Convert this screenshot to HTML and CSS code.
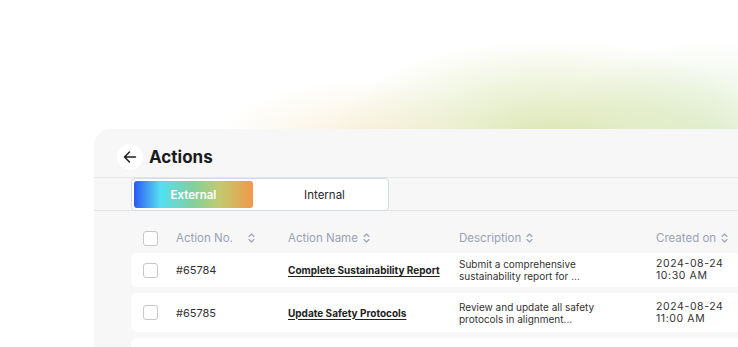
FILE: index.html
```html
<!DOCTYPE html>
<html lang="en">
<head>
  <meta charset="UTF-8">
  <title>Actions</title>
  <link rel="stylesheet" href="styles.css">
</head>
<body>

<div class="stage">
  <section class="card">

    <header class="card-head">
      <button class="back" aria-label="Back">
        <svg width="14" height="14" viewBox="0 0 14 14" fill="none" stroke="#1d1d1f" stroke-width="1.5" stroke-linecap="round" stroke-linejoin="round">
          <path d="M12.5 7H1.5M6.5 2L1.5 7l5 5"/>
        </svg>
      </button>
      <h1>Actions</h1>
    </header>

    <div class="tab-row">
      <div class="tabs">
        <span class="tab active">External</span>
        <span class="tab">Internal</span>
      </div>
    </div>

    <div class="table">
      <div class="row head">
        <span class="check"></span>
        <span class="th th-wide">Action No. <i class="sort"></i></span>
        <span class="th">Action Name <i class="sort"></i></span>
        <span class="th">Description <i class="sort"></i></span>
        <span class="th">Created on <i class="sort"></i></span>
      </div>

      <div class="row item">
        <span class="check"></span>
        <span class="num">#65784</span>
        <a class="name" href="#">Complete Sustainability Report</a>
        <span class="desc">Submit a comprehensive<br>sustainability report for ...</span>
        <span class="date">2024-08-24<br>10:30 AM</span>
      </div>

      <div class="row item tall">
        <span class="check"></span>
        <span class="num">#65785</span>
        <a class="name" href="#">Update Safety Protocols</a>
        <span class="desc">Review and update all safety<br>protocols in alignment...</span>
        <span class="date">2024-08-24<br>11:00 AM</span>
      </div>

      <div class="row item tall">
        <span class="check"></span>
        <span class="num">#65786</span>
        <a class="name" href="#">Conduct Energy Audit</a>
        <span class="desc">Assess energy usage across<br>all facilities...</span>
        <span class="date">2024-08-24<br>11:30 AM</span>
      </div>
    </div>

  </section>
</div>

</body>
</html>
```

FILE: styles.css
```css
html, body {
  margin: 0;
  height: 100%;
  overflow: hidden;
}

body {
  font-family: Inter, "Liberation Sans", sans-serif;
  color: #222;
  background:
    radial-gradient(ellipse 140px 60px at 360px 140px, rgba(244, 232, 198, 0.6), rgba(255, 255, 255, 0)),
    radial-gradient(ellipse 220px 100px at 550px 140px, rgba(216, 228, 172, 0.95), rgba(255, 255, 255, 0)),
    radial-gradient(ellipse 150px 95px at 705px 135px, rgba(222, 238, 210, 0.9), rgba(255, 255, 255, 0)),
    #fff;
}

.stage {
  padding: 129px 0 0 94px;
}

.card {
  width: 720px;
  height: 240px;
  background: #f7f7f7;
  border-radius: 16px 0 0 0;
}

.card-head {
  display: flex;
  align-items: center;
  gap: 6px;
  height: 40px;
  padding: 8px 0 0 23px;
  border-bottom: 1px solid #e3e5e8;
}

.back {
  width: 26px;
  height: 26px;
  border: none;
  border-radius: 50%;
  background: #fff;
  display: flex;
  align-items: center;
  justify-content: center;
  padding: 0;
}

.card-head h1 {
  margin: 0;
  font-size: 17px;
  font-weight: 700;
  color: #1b1b1d;
}

.tab-row {
  height: 32px;
  padding-left: 37px;
  border-bottom: 1px solid #e3e5e8;
}

.tabs {
  display: flex;
  width: 252px;
  height: 27px;
  padding: 2px;
  background: #fff;
  border: 1px solid #d4dbe5;
  border-radius: 4px;
}

.tab {
  flex: 0 0 119px;
  display: flex;
  align-items: center;
  justify-content: center;
  font-size: 11.5px;
  color: #2a2a2a;
}

.tab + .tab {
  flex: 1;
  padding-left: 10px;
}

.tab.active {
  color: #fff;
  font-weight: 600;
  border-radius: 3px;
  background: linear-gradient(90deg, #2a5af3 0%, #57def2 22%, #82cf9c 50%, #c3ca70 72%, #f2984a 100%);
}

.table {
  padding: 18px 0 0 37px;
  display: flex;
  flex-direction: column;
  gap: 6px;
}

.row {
  display: grid;
  grid-template-columns: 33px 112px 171px 197px 120px;
  align-items: center;
  padding-left: 12px;
}

.row.head {
  height: 18px;
}

.row.item {
  height: 34px;
  background: #fff;
  border-radius: 6px;
}

.row.item.tall {
  height: 39px;
}

.check {
  width: 13px;
  height: 13px;
  border: 1.5px solid #c7c7c7;
  border-radius: 3px;
  background: #fff;
}

.th {
  display: flex;
  align-items: center;
  gap: 5px;
  font-size: 11.5px;
  color: #9aa2b5;
}

.th-wide .sort {
  margin-left: 10px;
}

.sort {
  width: 7px;
  height: 10px;
  background:
    no-repeat center/7px 10px
    url("data:image/svg+xml,%3Csvg xmlns='http://www.w3.org/2000/svg' viewBox='0 0 7 10' fill='none' stroke='%239aa2b5' stroke-width='1.1' stroke-linecap='round' stroke-linejoin='round'%3E%3Cpath d='M1 3.5L3.5 1 6 3.5M1 6.5L3.5 9 6 6.5'/%3E%3C/svg%3E");
}

.num {
  font-size: 11px;
  color: #333;
}

.name {
  font-size: 10px;
  font-weight: 700;
  color: #222;
  text-decoration: underline;
  text-underline-offset: 2px;
}

.desc {
  font-size: 10px;
  line-height: 12px;
  color: #333;
}

.date {
  font-size: 10.5px;
  line-height: 12px;
  color: #333;
  letter-spacing: 0.6px;
}
```
